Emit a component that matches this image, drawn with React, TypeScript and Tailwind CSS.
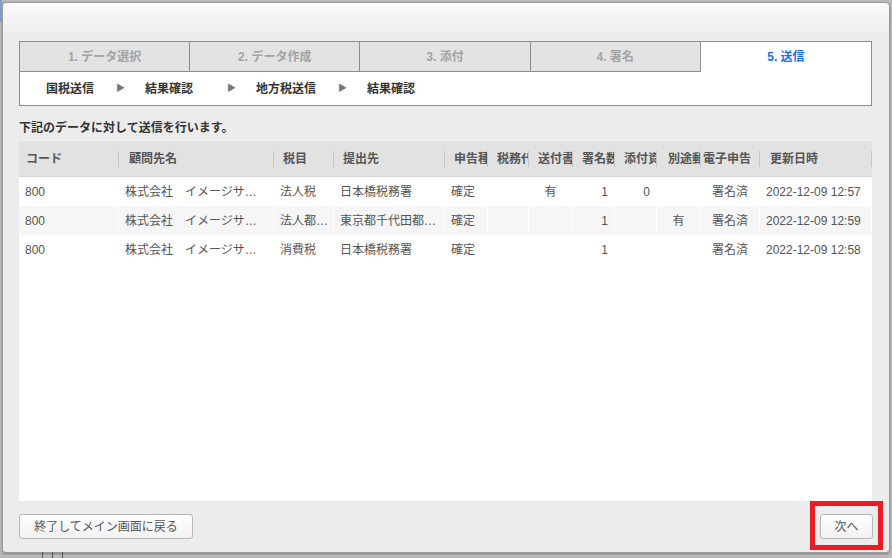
const FONT = "font-['Liberation_Sans','Noto_Sans_CJK_JP',sans-serif]"

const steps = ["1. データ選択", "2. データ作成", "3. 添付", "4. 署名", "5. 送信"]

type Col = { label: string; w: string; align: "left" | "right" | "center"; hp?: string }

const columns: Col[] = [
  { label: "コード", w: "w-[100px]", align: "left", hp: "pl-[7px]" },
  { label: "顧問先名", w: "w-[155px]", align: "left", hp: "pl-[10px]" },
  { label: "税目", w: "w-[60px]", align: "left" },
  { label: "提出先", w: "w-[111px]", align: "left" },
  { label: "申告種別", w: "w-[43px]", align: "left" },
  { label: "税務代理", w: "w-[41px]", align: "center" },
  { label: "送付書", w: "w-[44px]", align: "center" },
  { label: "署名数", w: "w-[42px]", align: "right" },
  { label: "添付資料", w: "w-[42px]", align: "right" },
  { label: "別途郵送", w: "w-[44px]", align: "center", hp: "pl-[11px]" },
  { label: "電子申告", w: "w-[59px]", align: "center", hp: "pl-[2px]" },
  { label: "更新日時", w: "w-[112px]", align: "left", hp: "pl-[10px]" },
]

const rows = [
  ["800", "株式会社　イメージサ…", "法人税", "日本橋税務署", "確定", "", "有", "1", "0", "", "署名済", "2022-12-09 12:57"],
  ["800", "株式会社　イメージサ…", "法人都…", "東京都千代田都…", "確定", "", "", "1", "", "有", "署名済", "2022-12-09 12:59"],
  ["800", "株式会社　イメージサ…", "消費税", "日本橋税務署", "確定", "", "", "1", "", "", "署名済", "2022-12-09 12:58"],
]

function StepTabs() {
  return (
    <div className="border border-[#8d8d8d] bg-white h-[65px] flex flex-col">
      <div className="grid grid-cols-5 h-[30px]">
        {steps.map((s, i) => {
          const active = i === steps.length - 1
          return (
            <div
              key={s}
              className={
                active
                  ? "flex items-center justify-center bg-white text-[12px] font-bold text-[#1b6ff0]"
                  : "flex items-center justify-center bg-[#e3e3e3] border-r border-b border-[#8d8d8d] text-[12px] font-bold text-[#a3a3a3]"
              }
            >
              {s}
            </div>
          )
        })}
      </div>
      <div className="flex-1 flex items-center text-[12px] font-bold text-[#333]">
        <span className="ml-[26px] w-[70px]">国税送信</span>
        <span className="w-[29px] text-[9px] text-[#777]">▶</span>
        <span className="w-[82px]">結果確認</span>
        <span className="w-[29px] text-[9px] text-[#777]">▶</span>
        <span className="w-[82px]">地方税送信</span>
        <span className="w-[29px] text-[9px] text-[#777]">▶</span>
        <span>結果確認</span>
      </div>
    </div>
  )
}

function DataTable() {
  return (
    <div className="mt-[4px] w-[853px] h-[360px] bg-white flex flex-col">
      <div className="flex h-[36px] bg-[#e2e2e2] border-b border-[#d6d6d6]">
        {columns.map((c) => (
          <div key={c.label} className={`${c.w} shrink-0 flex items-center overflow-hidden`}>
            <span className={`flex-1 overflow-hidden whitespace-nowrap text-[12px] font-bold text-[#555] ${c.hp ?? "pl-[9px]"}`}>
              {c.label}
            </span>
            <span className="w-px h-[16px] bg-[#c6c6c6] shrink-0" />
          </div>
        ))}
      </div>
      {rows.map((r, ri) => (
        <div key={ri} className={`flex h-[29px] ${ri % 2 === 1 ? "bg-[#f6f6f6]" : "bg-white"}`}>
          {r.map((v, ci) => {
            const c = columns[ci]
            const align =
              c.align === "right" ? "justify-end pr-[6px]" : c.align === "center" ? "justify-center" : "justify-start pl-[6px]"
            return (
              <div
                key={ci}
                className={`${c.w} shrink-0 flex items-center border-r border-white overflow-hidden whitespace-nowrap text-[12px] text-[#555] ${align} ${ci === 0 ? "pl-[5px]" : ""}`}
              >
                {v}
              </div>
            )
          })}
        </div>
      ))}
    </div>
  )
}

export default function App() {
  return (
    <div className={`relative w-[892px] h-[558px] bg-[#b9b9b9] overflow-hidden ${FONT}`}>
      <div className="absolute left-0 top-0 w-[2px] h-[22px] bg-[#7d9fc9]" />
      <div className="absolute left-[42px] top-[552px] w-px h-[6px] bg-[#555]" />
      <div className="absolute left-[52px] top-[552px] w-px h-[6px] bg-[#555]" />
      <div className="absolute left-[62px] top-[552px] w-px h-[6px] bg-[#555]" />

      <div className="ml-[2px] mt-[2px] w-[888px] h-[551px] border border-[#9c9c9c] rounded-[4px] shadow-[0_1px_2px_rgba(0,0,0,0.35)] bg-[linear-gradient(#fafafa,#ececec_34px)] pl-[16px] pt-[38px] flex flex-col">
        <div className="w-[853px]">
          <StepTabs />
        </div>

        <div className="mt-[13px] h-[18px] flex items-center text-[12px] font-bold text-[#333]">
          下記のデータに対して送信を行います。
        </div>

        <DataTable />

        <div className="mt-[13px] w-[854px] flex justify-between">
          <button
            type="button"
            className="w-[174px] h-[25px] border border-[#b8b8b8] rounded-[3px] bg-[linear-gradient(#ffffff,#f1f1f1)] text-[12px] text-[#555]"
          >
            終了してメイン画面に戻る
          </button>
          <button
            type="button"
            className="w-[53px] h-[25px] border border-[#b8b8b8] rounded-[3px] bg-[linear-gradient(#ffffff,#f1f1f1)] text-[12px] text-[#555]"
          >
            次へ
          </button>
        </div>
      </div>

      <div className="absolute left-[810px] top-[501px] w-[73px] h-[49px] border-[5px] border-[#ec1c24]" />
    </div>
  )
}
